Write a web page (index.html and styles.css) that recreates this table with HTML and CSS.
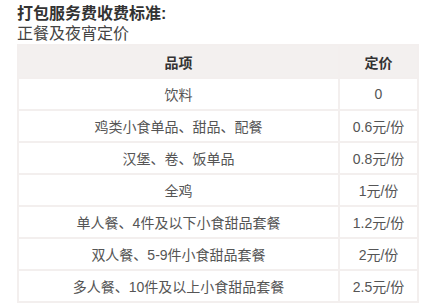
FILE: index.html
```html
<!DOCTYPE html>
<html lang="zh">
<head>
<meta charset="utf-8">
<link rel="stylesheet" href="styles.css">
</head>
<body>
<div class="page">
  <div class="title">打包服务费收费标准:</div>
  <div class="subtitle">正餐及夜宵定价</div>
  <table class="fees">
    <thead>
      <tr><th class="item">品项</th><th class="price">定价</th></tr>
    </thead>
    <tbody>
      <tr><td>饮料</td><td>0</td></tr>
      <tr><td>鸡类小食单品、甜品、配餐</td><td>0.6元/份</td></tr>
      <tr><td>汉堡、卷、饭单品</td><td>0.8元/份</td></tr>
      <tr><td>全鸡</td><td>1元/份</td></tr>
      <tr><td>单人餐、4件及以下小食甜品套餐</td><td>1.2元/份</td></tr>
      <tr><td>双人餐、5-9件小食甜品套餐</td><td>2元/份</td></tr>
      <tr><td>多人餐、10件及以上小食甜品套餐</td><td>2.5元/份</td></tr>
    </tbody>
  </table>
</div>
</body>
</html>
```
FILE: styles.css
```css
html, body {
  margin: 0;
  padding: 0;
  background: #fff;
}
body {
  font-family: "Liberation Sans", "Noto Sans CJK SC", sans-serif;
  color: #333;
}
.page {
  padding: 3px 17px 0 17px;
}
.title {
  font-size: 16px;
  line-height: 21px;
  font-weight: bold;
  color: #333;
}
.subtitle {
  font-size: 16px;
  line-height: 20px;
  color: #444;
}
.fees {
  width: 402px;
  border-collapse: collapse;
  font-size: 14px;
  table-layout: fixed;
}
.fees th, .fees td {
  border: 2px solid #f3efee;
  text-align: center;
  padding: 0;
}
.fees th {
  height: 31px;
  background: #f3f0ef;
  font-weight: bold;
  color: #333;
}
.fees td {
  height: 30px;
  color: #555;
}
.fees .item {
  width: 319px;
}
.fees .price {
  width: auto;
}
```
